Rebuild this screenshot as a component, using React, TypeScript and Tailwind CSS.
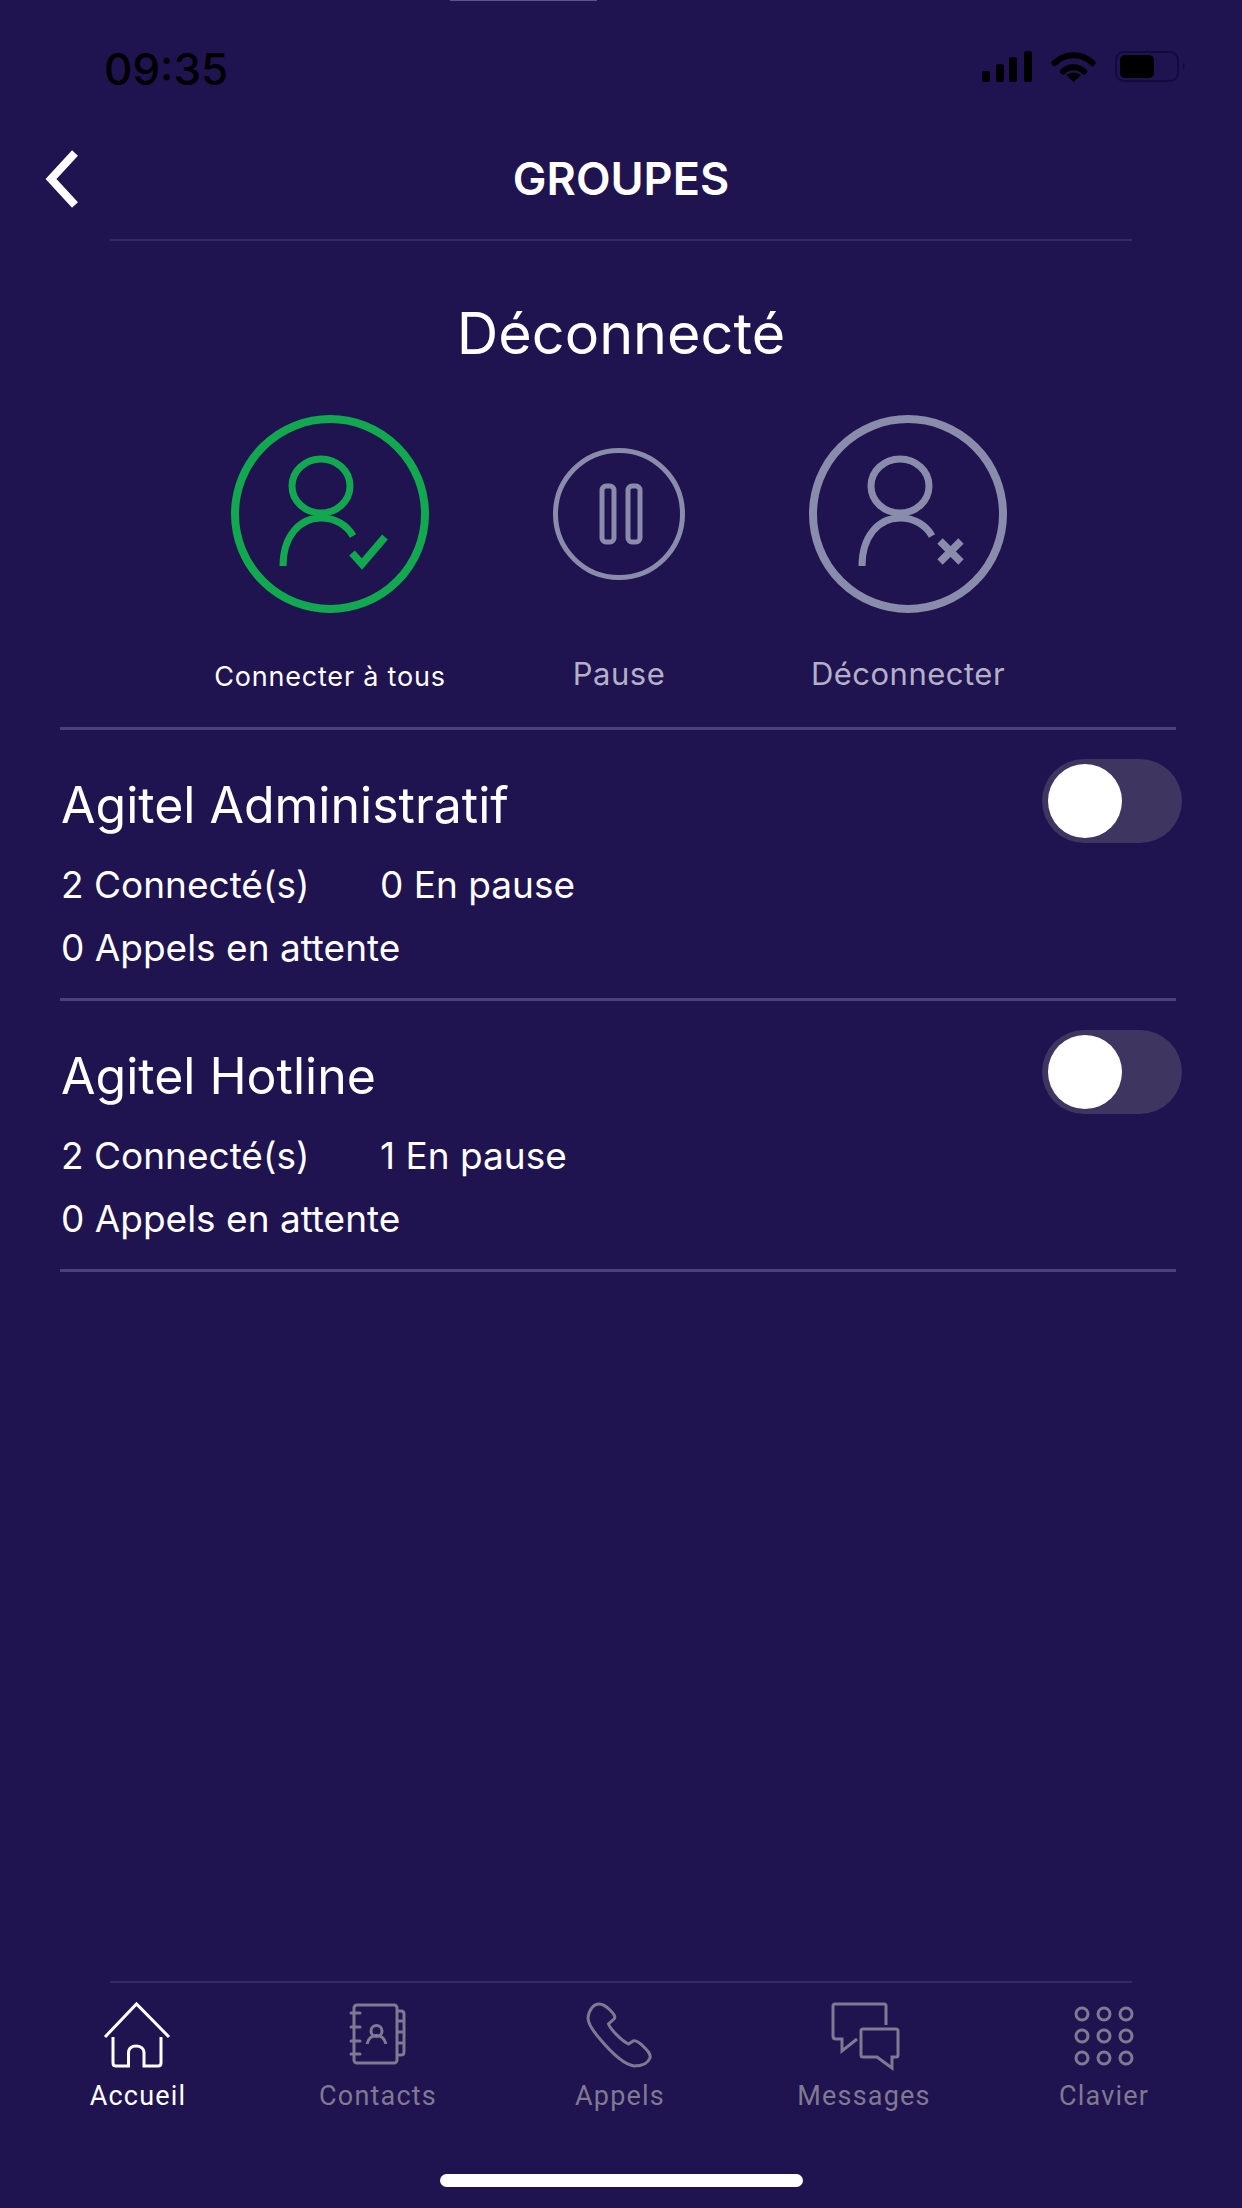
const GREY = "#8a8cab";

function StatusIcons() {
  return (
    <svg width="220" height="60" viewBox="0 0 220 60" fill="none">
      <rect x="12" y="32" width="8" height="11" rx="2.5" fill="#000" />
      <rect x="26" y="25" width="8" height="18" rx="2.5" fill="#000" />
      <rect x="39" y="18" width="8" height="25" rx="2.5" fill="#000" />
      <rect x="54" y="12" width="8" height="31" rx="2.5" fill="#000" />
      <path d="M84.5 24 A27 27 0 0 1 122.5 24" stroke="#000" strokeWidth="6" strokeLinecap="round" />
      <path d="M93 32.5 A15 15 0 0 1 114 32.5" stroke="#000" strokeWidth="6" strokeLinecap="round" />
      <path d="M103.5 43 L96 36 Q103.5 31 111 36 Z" fill="#000" />
      <rect x="146" y="13" width="62" height="29" rx="8" stroke="#120b3c" strokeWidth="2" />
      <rect x="150" y="16" width="34" height="23" rx="5" fill="#000" />
      <path d="M213 23 Q216 27 213 32 Z" fill="#120b3c" />
    </svg>
  );
}

function ConnectIcon() {
  return (
    <svg width="198" height="198" viewBox="0 0 198 198" fill="none" stroke="#12a84f" strokeWidth="7">
      <circle cx="99" cy="99" r="95" strokeWidth="8" />
      <ellipse cx="90" cy="71" rx="29" ry="27" />
      <path d="M52 151 C52 122 68 103 90 103 C104 103 116 110 122 121" />
      <path d="M121 138 L131 149 L154 122" strokeWidth="7.5" />
    </svg>
  );
}

function PauseIcon() {
  return (
    <svg width="132" height="132" viewBox="0 0 132 132" fill="none" stroke={GREY} strokeWidth="5">
      <circle cx="66" cy="66" r="63.5" />
      <rect x="49" y="38" width="12" height="56" rx="4" />
      <rect x="75" y="38" width="12" height="56" rx="4" />
    </svg>
  );
}

function DisconnectIcon() {
  return (
    <svg width="198" height="198" viewBox="0 0 198 198" fill="none" stroke={GREY} strokeWidth="7">
      <circle cx="99" cy="99" r="95" strokeWidth="8" />
      <ellipse cx="91" cy="71" rx="29" ry="27" />
      <path d="M53 151 C53 122 69 103 91 103 C105 103 117 110 123 121" />
      <path d="M131 126 L152 147 M152 126 L131 147" strokeWidth="7.5" />
    </svg>
  );
}

function HomeIcon() {
  return (
    <svg width="74" height="72" viewBox="1 0 74 72" fill="none" stroke="#fff" strokeWidth="3">
      <path d="M5 37 L36.5 4 L69 37" />
      <path d="M13 37 V63 Q13 66 16 66 H28.5 V53 C28.5 48 32 46 36 46 C40 46 44 48 44 53 V66 H58 Q61 66 61 63 V37" />
    </svg>
  );
}

function ContactsIcon() {
  return (
    <svg width="60" height="72" viewBox="0 0 60 72" fill="none" stroke="#7f7a92" strokeWidth="3">
      <rect x="6" y="5" width="43" height="58" rx="3" />
      <path d="M49 11 H53 Q56 11 56 14 V52 Q56 55 53 55 H49 M49 21 H56 M49 32 H56 M49 43 H56" />
      <path d="M3 13 H12 M3 27 H12 M3 41 H12 M3 54 H12" strokeLinecap="round" />
      <circle cx="28.5" cy="31" r="5.5" />
      <path d="M19 44 C20.5 38 24 35.5 28.5 35.5 C33 35.5 36.5 38 38 44" />
    </svg>
  );
}

function PhoneIcon() {
  return (
    <svg width="100" height="72" viewBox="0 9 100 72" fill="none" stroke="#7f7a92" strokeWidth="3">
      <path d="M18 27 C19 18 24 13 29 13 C34 13 37 16 40 19 C44 23 46 26 44 28 L38.5 33 C41 39 52 50 58.5 53 L63 50 C66 49 70 52 74 56 C78 60 81 63 80 67 C78 72 72 75 64 75 C52 73 40 60 30 48 C23 40 18 33 18 27 Z" />
    </svg>
  );
}

function MessagesIcon() {
  return (
    <svg width="74" height="72" viewBox="-2 0 74 72" fill="none" stroke="#7f7a92" strokeWidth="3">
      <path d="M57 25 V6 Q57 4 55 4 H6 Q4 4 4 6 V36 Q4 39 7 39 H13 V51 L28 39" />
      <path d="M34 29 H67 Q69 29 69 31 V55 Q69 57 67 57 H63 V68 L48 57 H34 Q32 57 32 55 V31 Q32 29 34 29 Z" />
    </svg>
  );
}

function KeypadIcon() {
  const cells = [8, 30, 52];
  return (
    <svg width="60" height="60" viewBox="0 0 60 60" fill="none" stroke="#7f7a92" strokeWidth="3">
      {cells.map((cy) => cells.map((cx) => <circle key={`${cx}-${cy}`} cx={cx} cy={cy} r="6" />))}
    </svg>
  );
}

function Toggle() {
  return (
    <div className="flex h-[84px] w-[140px] items-center rounded-full bg-[#3e3560] pl-[6px]">
      <div className="h-[74px] w-[74px] rounded-full bg-white" />
    </div>
  );
}

const groups = [
  { name: "Agitel Administratif", connected: 2, paused: 0, waiting: 0 },
  { name: "Agitel Hotline", connected: 2, paused: 1, waiting: 0 },
];

const tabs = [
  { label: "Accueil", icon: <HomeIcon />, active: true },
  { label: "Contacts", icon: <ContactsIcon />, active: false },
  { label: "Appels", icon: <PhoneIcon />, active: false },
  { label: "Messages", icon: <MessagesIcon />, active: false },
  { label: "Clavier", icon: <KeypadIcon />, active: false },
];

export default function App() {
  return (
    <div className="flex h-[2208px] w-[1242px] flex-col overflow-hidden bg-[#1f1350] font-['Inter',sans-serif] text-white">
      <div className="ml-[450px] h-px w-[147px] bg-[#5c5488]" />

      <div className="mt-[40px] flex h-[56px] items-center justify-between pl-[104px] pr-[52px]">
        <span className="text-[44px] font-medium leading-none text-black">09:35</span>
        <StatusIcons />
      </div>

      <div className="mt-[22px] grid h-[120px] grid-cols-[1fr_auto_1fr] items-center px-[44px]">
        <svg width="36" height="58" viewBox="0 0 36 58" fill="none" stroke="#fff" strokeWidth="8">
          <path d="M31 3 L7 29 L31 55" />
        </svg>
        <span className="text-[45px] font-semibold">GROUPES</span>
        <span />
      </div>
      <div className="mx-[110px] h-[2px] bg-[#332a66]" />

      <h1 className="mt-[52px] text-center text-[57.5px] font-normal leading-[80px]">Déconnecté</h1>

      <div className="ml-[185px] mt-[42px] grid h-[198px] grid-cols-[290px_288px_290px] items-center justify-items-center">
        <ConnectIcon />
        <PauseIcon />
        <DisconnectIcon />
      </div>
      <div className="ml-[185px] mt-[41px] grid grid-cols-[290px_288px_290px] justify-items-center leading-[40px]">
        <span className="pt-[3px] text-[27px] tracking-[0.8px]">Connecter à tous</span>
        <span className="text-[31px] tracking-[0.5px] text-[#b3b0c8]">Pause</span>
        <span className="text-[31px] tracking-[0.5px] text-[#b3b0c8]">Déconnecter</span>
      </div>
      <div className="ml-[60px] mr-[66px] mt-[30px] h-[3px] bg-[#4b4079]" />

      {groups.map((group) => (
        <div key={group.name}>
          <div className="ml-[61px] mr-[60px] mt-[29px] flex h-[84px] items-center justify-between">
            <span className="pt-[8px] text-[50px] leading-none">{group.name}</span>
            <Toggle />
          </div>
          <div className="ml-[61px] mt-[10px] text-[37px] leading-[63px]">
            <div className="flex">
              <span className="w-[319px]">{group.connected} Connecté(s)</span>
              <span>{group.paused} En pause</span>
            </div>
            <div>{group.waiting} Appels en attente</div>
          </div>
          <div className="ml-[60px] mr-[66px] mt-[19px] h-[3px] bg-[#4b4079]" />
        </div>
      ))}

      <div className="mt-auto">
        <div className="mx-[110px] h-[2px] bg-[#332a66]" />
        <div className="mt-[17px] grid grid-cols-[240px_240px_244px_244px_236px] pl-[18px]">
          {tabs.map((tab) => (
            <div key={tab.label} className="flex flex-col items-center">
              <div className="flex h-[72px] items-center justify-center">{tab.icon}</div>
              <span className={`mt-[4px] font-['Roboto',sans-serif] text-[27px] leading-[40px] tracking-[1.2px] ${tab.active ? "text-white" : "text-[#7f7a92]"}`}>
                {tab.label}
              </span>
            </div>
          ))}
        </div>
        <div className="mx-auto mb-[21px] mt-[58px] h-[13px] w-[363px] rounded-full bg-white" />
      </div>
    </div>
  );
}
